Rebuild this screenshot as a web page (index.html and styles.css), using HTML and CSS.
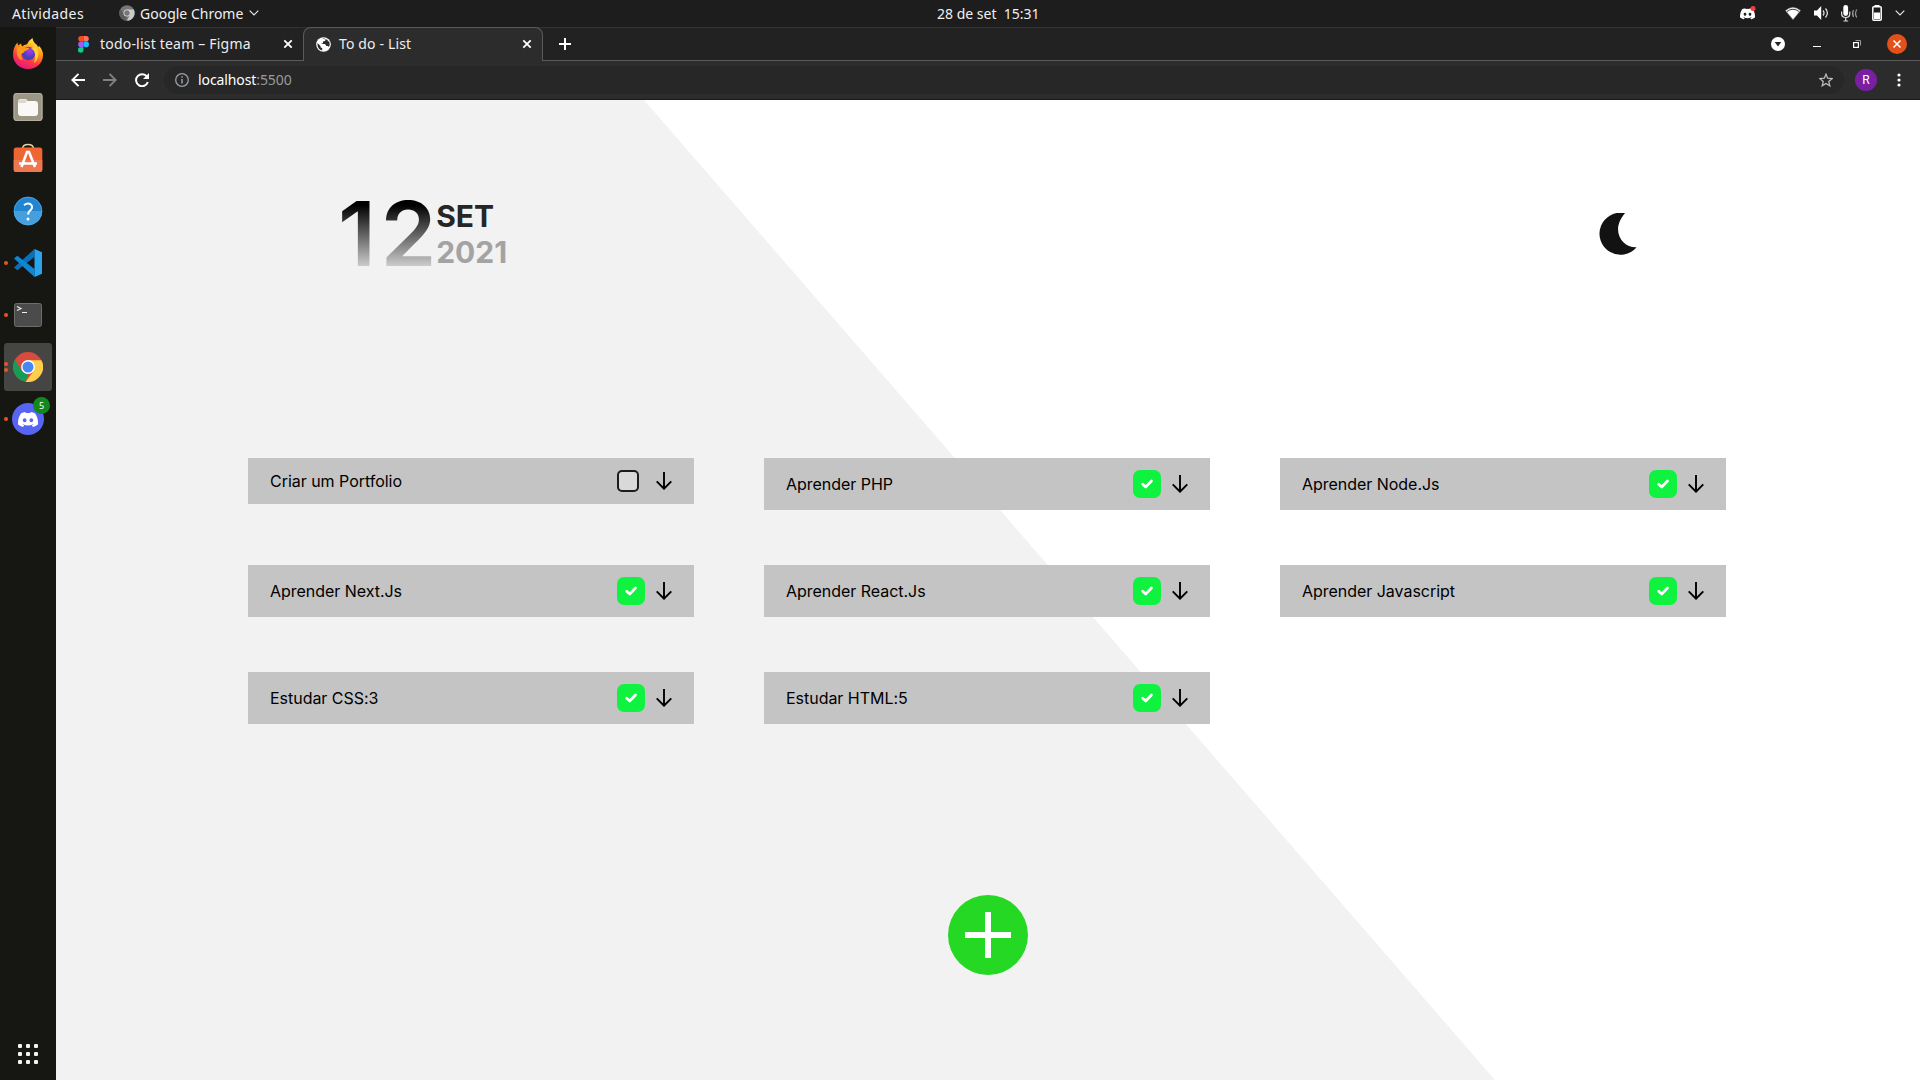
FILE: index.html
```html
<!DOCTYPE html>
<html lang="pt-BR">
<head>
<meta charset="utf-8">
<title>To do - List</title>
<link rel="stylesheet" href="styles.css">
</head>
<body>
<svg class="defs" width="0" height="0" aria-hidden="true">
  <symbol id="arrow" viewBox="0 0 16 18"><path d="M8 0v17M.7 9.3 8 16.7l7.3-7.4" fill="none" stroke="#000" stroke-width="1.9"/></symbol>
  <symbol id="check" viewBox="0 0 28 28"><path d="M9.700 14.200l3 2.800 5.800-6" fill="none" stroke="#fff" stroke-width="2.700" stroke-linecap="round" stroke-linejoin="round"/></symbol>
  <symbol id="close" viewBox="0 0 10 10"><path d="M1.3 1.3l7.4 7.4M8.7 1.3L1.3 8.7" stroke="#fff" stroke-width="1.8"/></symbol>
  <symbol id="chevron" viewBox="0 0 10 6"><path d="M.7.7L5 5 9.3.7" fill="none" stroke="#e6e6e6" stroke-width="1.2"/></symbol>
  <symbol id="discord" viewBox="0 0 24 18"><path d="M20.3 1.5A20 20 0 0 0 15.400 0l-.7 1.300a18 18 0 0 0-5.400 0L8.600 0a20 20 0 0 0-4.900 1.500C.6 6.100-.3 10.600.1 15a20 20 0 0 0 6 3l1.300-2-2-1 .5-.4a14 14 0 0 0 12.200 0l.5.400-2 1 1.300 2a20 20 0 0 0 6-3c.5-5.200-.8-9.600-3.600-13.500zM8 12.300c-1.200 0-2.200-1.100-2.200-2.400S6.800 7.500 8 7.500s2.200 1.100 2.200 2.400-1 2.400-2.200 2.400zm8 0c-1.200 0-2.200-1.100-2.200-2.400s1-2.400 2.200-2.400 2.200 1.100 2.200 2.400-1 2.400-2.200 2.400z" fill="#fff"/></symbol>
</svg>

<div class="desktop">
  <header class="topbar">
    <div class="topbar-left">
      <span class="activities">Atividades</span>
      <svg class="mini-chrome" width="16" height="16" viewBox="0 0 32 32"><circle cx="16" cy="16" r="15.500" fill="#777"/><path d="M16 9h13.500A15.500 15.500 0 0 1 16 31.500L22 19z" fill="#c9c9c9"/><path d="M3 7.500L10 19l6 4-3 8A15.500 15.500 0 0 1 3 7.500z" fill="#5c5c5c"/><circle cx="16" cy="16" r="7" fill="#ddd"/><circle cx="16" cy="16" r="5.400" fill="#777"/></svg>
      <span class="app-name">Google Chrome</span>
      <svg width="10" height="6"><use href="#chevron"/></svg>
    </div>
    <span class="clock">28 de set&nbsp; 15:31</span>
    <div class="tray">
      <svg class="tray-discord" width="16" height="14" viewBox="0 0 16 14"><svg y="2" width="15" height="11.500" viewBox="0 0 24 18"><use href="#discord"/></svg><circle cx="13" cy="2.500" r="2.500" fill="#f23f43"/></svg>
      <svg class="tray-wifi" width="16" height="13" viewBox="0 0 16 13"><path d="M.6 3.600Q8-2.600 15.400 3.600L8 12.600z" fill="#fff" stroke="#aaa" stroke-width=".6"/><path d="M2 4.500Q8 0 14 4.500" fill="none" stroke="#444" stroke-width="1"/></svg>
      <svg class="tray-volume" width="15" height="14" viewBox="0 0 15 14"><path d="M0 4.500h3L7.200 0v14L3 9.500H0z" fill="#fff"/><path d="M9 4.500q2 2.500 0 5M11.500 2.500q3.800 4.500 0 9" fill="none" stroke="#ddd" stroke-width="1.300"/></svg>
      <svg class="tray-mic" width="17" height="17" viewBox="0 0 17 17"><rect x="2.300" y="0" width="4.800" height="11" rx="2.400" fill="#fff"/><path d="M.6 6.500v2q0 4 4.100 4t4.100-4v-2M4.700 12.500v3.500M2.500 16h4.600" fill="none" stroke="#ddd" stroke-width="1.200"/><path d="M12.500 5q-1.800 3.500 0 7M15.800 4.500q-2.500 4 0 8" fill="none" stroke="#999" stroke-width="1.200"/></svg>
      <svg class="tray-battery" width="10" height="16" viewBox="0 0 10 16"><rect x="2.500" y="0" width="5" height="2" fill="#fff"/><rect x=".8" y="1.800" width="8.400" height="13.400" rx="1" fill="none" stroke="#fff" stroke-width="1.500"/><rect x="2" y="7.500" width="6" height="6.500" fill="#fff"/></svg>
      <svg width="10" height="6"><use href="#chevron"/></svg>
    </div>
  </header>

  <nav class="dock">
    <div class="dock-item raised"><svg width="30" height="31" viewBox="0 0 30 31">
      <defs><linearGradient id="ff" x1=".75" y1="0" x2=".3" y2="1"><stop offset="0" stop-color="#fff44f"/><stop offset=".4" stop-color="#ff980e"/><stop offset=".7" stop-color="#ff3647"/><stop offset="1" stop-color="#e31587"/></linearGradient><radialGradient id="ffc" cx=".6" cy=".3"><stop offset="0" stop-color="#a63cf0"/><stop offset="1" stop-color="#4a3fb8"/></radialGradient></defs>
      <path d="M15 31C6 31 0 24.500 0 16.500 0 11 2 7.500 4.500 4.500l.5 3L8 5.500l1 3q2-2 5-2.200Q15.500 2.500 19.500 0q.5 4 4 6.500 1.200 1 1.500 2.500l1.200-1Q30 12 30 17c0 8-6.500 14-15 14z" fill="url(#ff)"/>
      <circle cx="15.500" cy="15.500" r="6.700" fill="url(#ffc)"/>
      <path d="M4 10q3-3 6.500-.8l5.500.8q.5 1-1.500 2l-2.500 1q-1 2-4 3Q8 19 9.500 22 6.500 22 5 19 3 15 4 10z" fill="#ff9a1f"/>
      <path d="M20 6q7 4 5 13-1 4-4 6 2-5 1-9-1-4-4-6 4 1 2-4z" fill="#ffcf35"/></svg></div>
    <div class="dock-item"><svg width="30" height="30" viewBox="0 0 30 30"><rect x=".5" y="1" width="29" height="28" rx="3" fill="#9c9684"/><rect x="1" y="1.500" width="28" height="27" rx="2.500" fill="none" stroke="#b5af9f"/><path d="M5 10q0-3 3-3h5l1.500 2H22q3 0 3 3v9q0 3-3 3H8q-3 0-3-3z" fill="#f9f8f6"/><path d="M5.300 10q0-2.600 2.700-2.600h5l.8 1.600-1.500 2H5.300z" fill="#dbd8d0"/></svg></div>
    <div class="dock-item raised"><svg width="30" height="30" viewBox="0 0 30 30"><path d="M9.500 6q0-4.500 5.500-4.500T20.500 6" fill="none" stroke="#e3cfa2" stroke-width="1.500"/><rect x=".7" y="4.500" width="28.600" height="24.500" rx="2.500" fill="#f06633"/><path d="M.7 17h28.600v9.500q0 2.500-2.500 2.500H3.200Q.7 29 .7 26.500z" fill="#ef7750"/><path d="M8.500 24L14 9h2l6 15M6 20.500h18" fill="none" stroke="#fff" stroke-width="2.600"/></svg></div>
    <div class="dock-item"><svg width="30" height="30" viewBox="0 0 30 30"><circle cx="15" cy="15" r="14.200" fill="#2285d2"/><path d="M.8 15a14.200 14.200 0 0 0 28.400 0z" fill="#459fdd"/><circle cx="15" cy="15" r="13.800" fill="none" stroke="#4fa6e2" stroke-width=".8"/><path d="M11 9.200q3.500-2.700 6.500-1 3 2.300.5 5.500-3 2.300-2.900 4.800" fill="none" stroke="#fff" stroke-width="2"/><circle cx="15" cy="23" r="1.500" fill="#fff"/></svg></div>
    <div class="dock-item running"><svg width="28" height="28" viewBox="0 0 28 28"><path d="M20.500 0v8L3.300 21.300 0 18.600z" fill="#0a6fb8"/><path d="M0 9.400l3.300-2.700L20.500 20v8z" fill="#0e86d3"/><path d="M20.500 0L28 3.300v21.400L20.500 28z" fill="#2ba4ee"/></svg></div>
    <div class="dock-item running"><svg width="28" height="24" viewBox="0 0 28 24"><rect x=".5" y=".5" width="27" height="23" rx="2" fill="#4b4b4b" stroke="#6d6d6d"/><path d="M3 3.500l4 2-4 2M8 9.500h5" fill="none" stroke="#eee" stroke-width="1.100"/></svg></div>
    <div class="dock-item running twice active"><svg width="30" height="30" viewBox="0 0 30 30"><circle cx="15" cy="15" r="15" fill="#d84b3f"/><path d="M2 7.500l6.500 11 6.500 3.500-2.300 7.800A15 15 0 0 1 2 7.500z" fill="#179c55"/><path d="M15 8.200h13.400A15 15 0 0 1 12.700 29.800L21 18.500z" fill="#fdcf4a"/><circle cx="15" cy="15" r="6.900" fill="#fff"/><circle cx="15" cy="15" r="5.500" fill="#4688f1"/></svg></div>
    <div class="dock-item running"><svg width="32" height="32" viewBox="0 0 32 32"><circle cx="16" cy="16" r="16" fill="#5865f2"/><svg x="6" y="9" width="20" height="15" viewBox="0 0 24 18"><use href="#discord"/></svg></svg><span class="badge">5</span></div>
    <div class="apps"><i></i><i></i><i></i><i></i><i></i><i></i><i></i><i></i><i></i></div>
  </nav>

  <div class="browser">
    <div class="tabs">
      <div class="tab tab-idle">
        <svg width="11" height="17" viewBox="0 0 11 17"><path d="M3 0h2.500v5.600H3A2.800 2.800 0 0 1 3 0z" fill="#f24e1e"/><path d="M5.500 0H8a2.800 2.800 0 0 1 0 5.600H5.500z" fill="#ff7262"/><path d="M3 5.600h2.500v5.600H3a2.800 2.800 0 0 1 0-5.600z" fill="#a259ff"/><circle cx="8.200" cy="8.400" r="2.800" fill="#1abcfe"/><path d="M3 11.200h2.500V14A2.800 2.800 0 1 1 3 11.200z" fill="#0acf83"/></svg>
        <span class="tab-title title-figma">todo-list team – Figma</span>
        <svg class="tab-close" width="10" height="10"><use href="#close"/></svg>
      </div>
      <div class="tab tab-active">
        <svg width="15" height="15" viewBox="0 0 15 15"><circle cx="7.500" cy="7.500" r="7.300" fill="#fff"/><path d="M1.500 6l3 3v1.200l1.700 1v2.300Q2 12.500 1.500 8zM6 1.800Q8 1 10 2l-1 2-2 .5v1.500L5 7h4l1.500 2h1.500l1 1q1-2 .5-5l-1.500-1-1-1.500z" fill="#2b2b2b"/></svg>
        <span class="tab-title title-list">To do - List</span>
        <svg class="tab-close" width="10" height="10"><use href="#close"/></svg>
      </div>
      <svg class="new-tab" width="12" height="12" viewBox="0 0 12 12"><path d="M6 0v12M0 6h12" stroke="#fff" stroke-width="2"/></svg>
      <div class="window-controls">
        <svg width="14" height="14" viewBox="0 0 14 14"><circle cx="7" cy="7" r="7" fill="#fff"/><path d="M3.700 5h6.600L7 9.500z" fill="#222"/></svg>
        <svg width="8" height="14" viewBox="0 0 8 14"><path d="M0 9.500h8" stroke="#fff"/></svg>
        <svg class="restore" width="8" height="8" viewBox="0 0 8 8"><path d="M2.500.5h5v5" fill="none" stroke="#999"/><rect x=".6" y="2.600" width="4.800" height="4.800" fill="none" stroke="#fff" stroke-width="1.200"/></svg>
        <svg class="quit" width="20" height="20" viewBox="0 0 20 20"><circle cx="10" cy="10" r="10" fill="#e2501b"/><path d="M6.500 6.500l7 7M13.500 6.500l-7 7" stroke="#fff" stroke-width="1.500"/></svg>
      </div>
    </div>
    <div class="toolbar">
      <div class="nav">
        <svg width="14" height="14" viewBox="0 0 14 14"><path d="M14 7H1.500M7.500.8L1.300 7l6.200 6.200" fill="none" stroke="#fff" stroke-width="1.900"/></svg>
        <svg width="14" height="14" viewBox="0 0 14 14"><path d="M0 7h12.500M6.500.8L12.700 7l-6.200 6.200" fill="none" stroke="#818181" stroke-width="1.900"/></svg>
        <svg width="14" height="14" viewBox="0 0 14 14"><path d="M12 3.800A6 6 0 1 0 12.800 9" fill="none" stroke="#fff" stroke-width="2"/><path d="M14 0v6H8z" fill="#fff"/></svg>
      </div>
      <div class="address">
        <svg width="14" height="14" viewBox="0 0 14 14"><circle cx="7" cy="7" r="6.300" fill="none" stroke="#9aa0a6" stroke-width="1.300"/><path d="M7 6v4.500M7 3.300v1.500" stroke="#9aa0a6" stroke-width="1.500"/></svg>
        <span class="url">localhost<span class="port">:5500</span></span>
        <svg class="star" width="14" height="14" viewBox="0 0 24 24"><path d="M12 2l2.900 7 7.600.6-5.800 5 1.800 7.400-6.500-4-6.500 4 1.800-7.400-5.800-5 7.600-.6z" fill="none" stroke="#bbb" stroke-width="2.200"/></svg>
      </div>
      <span class="avatar">R</span>
      <svg class="more" width="4" height="14" viewBox="0 0 4 14"><circle cx="2" cy="2" r="1.600" fill="#fff"/><circle cx="2" cy="7" r="1.600" fill="#fff"/><circle cx="2" cy="12" r="1.600" fill="#fff"/></svg>
    </div>

    <main class="page">
      <header class="page-header">
        <div class="date">
          <span class="day">12</span>
          <div class="month-year"><span class="month">SET</span><span class="year">2021</span></div>
        </div>
        <svg class="moon" width="38" height="42" viewBox="0 0 38 42"><path d="M26 .2A21 21 0 1 0 37.600 34.200C24 35.200 10.500 18 26 .2z" fill="#121212"/></svg>
      </header>
      <section class="tasks">
        <article class="task todo"><span class="name">Criar um Portfolio</span><span class="slot"><span class="box"></span></span><svg width="16" height="18"><use href="#arrow"/></svg></article>
        <article class="task"><span class="name">Aprender PHP</span><svg class="done" width="28" height="28"><use href="#check"/></svg><svg width="16" height="18"><use href="#arrow"/></svg></article>
        <article class="task"><span class="name">Aprender Node.Js</span><svg class="done" width="28" height="28"><use href="#check"/></svg><svg width="16" height="18"><use href="#arrow"/></svg></article>
        <article class="task"><span class="name">Aprender Next.Js</span><svg class="done" width="28" height="28"><use href="#check"/></svg><svg width="16" height="18"><use href="#arrow"/></svg></article>
        <article class="task"><span class="name">Aprender React.Js</span><svg class="done" width="28" height="28"><use href="#check"/></svg><svg width="16" height="18"><use href="#arrow"/></svg></article>
        <article class="task"><span class="name">Aprender Javascript</span><svg class="done" width="28" height="28"><use href="#check"/></svg><svg width="16" height="18"><use href="#arrow"/></svg></article>
        <article class="task"><span class="name">Estudar CSS:3</span><svg class="done" width="28" height="28"><use href="#check"/></svg><svg width="16" height="18"><use href="#arrow"/></svg></article>
        <article class="task"><span class="name">Estudar HTML:5</span><svg class="done" width="28" height="28"><use href="#check"/></svg><svg width="16" height="18"><use href="#arrow"/></svg></article>
      </section>
      <svg class="add" width="80" height="80" viewBox="0 0 80 80"><circle cx="40" cy="40" r="40" fill="#24d823"/><path d="M40 17v46M17 40h46" stroke="#fff" stroke-width="6"/></svg>
    </main>
  </div>
</div>
</body>
</html>
```
FILE: styles.css
```css
* { box-sizing: border-box; }
body { margin: 0; overflow: hidden; font-family: "Noto Sans", sans-serif; }
svg { display: block; flex: none; }
.defs { position: absolute; }

.desktop {
  display: grid;
  grid-template: 27px 1053px / 56px 1864px;
  width: 1920px;
  height: 1080px;
  background: #161613;
}

/* System bar */
.topbar {
  grid-column: 1 / 3;
  display: grid;
  grid-template-columns: 937px 102px 1fr;
  align-items: center;
  background: #1d1d1d;
  color: #f0f0f0;
  font-size: 14px;
  line-height: 25px;
  padding-bottom: 1px;
  white-space: nowrap;
}
.topbar-left { display: flex; align-items: center; padding-left: 12px; }
.activities { width: 107px; letter-spacing: .4px; }
.app-name { width: 104px; margin: 0 5px; }
.tray { display: flex; align-items: center; justify-content: flex-end; padding-right: 15px; }
.tray-discord { margin-right: 29px; }
.tray-wifi { margin-right: 13px; }
.tray-volume { margin-right: 12px; }
.tray-mic { margin-right: 14px; }
.tray-battery { margin-right: 13px; }

/* Dock */
.dock { display: flex; flex-direction: column; align-items: center; gap: 4px; padding: 4px 0 16px; }
.dock-item {
  position: relative;
  display: flex;
  align-items: center;
  justify-content: center;
  width: 48px;
  height: 48px;
  border-radius: 3px;
}
.dock-item.active { background: #454543; }
.raised { padding-bottom: 3px; }
.running::before {
  content: "";
  position: absolute;
  left: 0;
  top: 22px;
  width: 4px;
  height: 4px;
  border-radius: 50%;
  background: #e95420;
}
.twice::before { top: 19px; box-shadow: 0 6px #e95420; }
.badge {
  position: absolute;
  left: 29px;
  top: 2px;
  width: 17px;
  height: 17px;
  border-radius: 50%;
  background: #12891d;
  color: #fff;
  font-size: 9px;
  line-height: 17px;
  text-align: center;
}
.apps { display: grid; grid-template-columns: repeat(3, 4px); gap: 4px; margin-top: auto; }
.apps i { width: 4px; height: 4px; border-radius: 1px; background: #f2f2f2; }

/* Browser chrome */
.browser { display: flex; flex-direction: column; border-top: 1px solid #333; }
.tabs {
  position: relative;
  display: flex;
  height: 33px;
  background: #222;
  box-shadow: inset 0 -1px #5a5a5a;
  color: #eee;
  font-size: 14px;
}
.tab { display: flex; align-items: center; padding-bottom: 1px; white-space: nowrap; }
.tab-idle { width: 247px; padding-left: 22px; }
.tab-title { margin-left: 11px; padding-bottom: 1px; }
.title-figma { letter-spacing: .2px; }
.title-list { margin-left: 8px; letter-spacing: .15px; }
.tab-close { margin-left: auto; margin-right: 10px; }
.tab-active {
  width: 240px;
  height: 34px;
  margin-top: -1px;
  padding-left: 12px;
  background: #2c2c2c;
  border: 1px solid #5a5a5a;
  border-bottom: 0;
  border-radius: 8px 8px 0 0;
}
.new-tab { margin: 10px 0 0 16px; }
.window-controls { display: flex; align-items: center; gap: 28px; margin-left: auto; padding-right: 13px; padding-bottom: 1px; }
.restore { margin-left: 4px; }
.quit { margin-left: -2px; }
.toolbar { display: flex; align-items: center; height: 39px; background: #2c2c2c; border-bottom: 1px solid #1a1a1a; }
.nav { display: flex; gap: 18px; width: 108px; padding-left: 15px; }
.address {
  display: flex;
  align-items: center;
  width: 1680px;
  height: 28px;
  padding: 0 11px;
  border-radius: 14px;
  background: #272727;
  font-size: 14px;
}
.url { margin-left: 9px; padding-bottom: 1px; color: #fff; letter-spacing: -.1px; }
.port { color: #9a9a9a; }
.star { margin-left: auto; }
.avatar {
  width: 22px;
  height: 22px;
  margin-left: 11px;
  border-radius: 50%;
  background: #7b1fa2;
  color: #fff;
  font: 12px/22px Roboto, sans-serif;
  text-align: center;
}
.more { margin-left: 19.500px; }

/* To-do page */
.page {
  position: relative;
  isolation: isolate;
  display: flex;
  flex-direction: column;
  height: 980px;
  padding-left: 192px;
  background: #f2f2f2;
  font-family: Inter, sans-serif;
}
.page::before {
  content: "";
  position: absolute;
  inset: 0;
  z-index: -1;
  background: #fff;
  clip-path: polygon(588px 0, 100% 0, 100% 100%, 1439px 100%);
}
.page-header { display: flex; justify-content: space-between; width: 1389px; height: 358px; padding: 79px 0 0 90px; }
.date { display: flex; }
.day {
  height: 109px;
  margin-right: -5px;
  font-size: 90px;
  font-weight: 600;
  line-height: 109px;
  letter-spacing: 4.500px;
  background: linear-gradient(#000 24%, #ccc 80%);
  -webkit-background-clip: text;
  background-clip: text;
  color: transparent;
}
.month-year { display: flex; flex-direction: column; padding-top: 19px; font-size: 30px; line-height: 36px; }
.month { font-weight: 700; color: #262626; }
.year { font-weight: 700; color: #a3a3a3; }
.moon { margin-top: 34px; }
.tasks { display: grid; grid-template-columns: repeat(3, 446px); grid-auto-rows: 52px; gap: 55px 70px; align-items: start; }
.task { display: flex; align-items: center; height: 52px; padding: 0 22px; background: #c4c4c4; color: #000; font-size: 16px; }
.todo { height: 46px; }
.name { margin-right: auto; letter-spacing: -.03px; }
.done, .slot { width: 28px; margin-right: 11px; }
.done { border-radius: 7px; background: #10f240; }
.box { display: block; width: 22px; height: 22px; border: 2px solid #1c1c1c; border-radius: 5px; background: #d9d9d9; }
.add { margin: 171px 0 0 700px; }
```
